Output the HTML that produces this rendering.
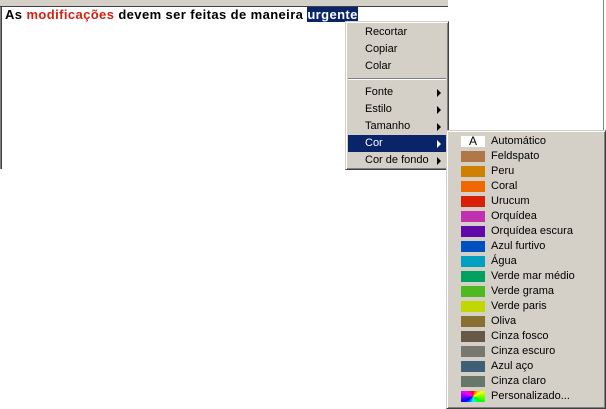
<!DOCTYPE html>
<html><head><meta charset="utf-8"><style>
*{margin:0;padding:0;box-sizing:border-box}
body{width:606px;height:409px;background:#fff;position:relative;overflow:hidden;font-family:"Liberation Sans",sans-serif;font-size:11px}
.abs{position:absolute}
.menu{position:absolute;background:#d4d0c8;border-top:1px solid #d4d0c8;border-left:1px solid #d4d0c8;border-right:1px solid #404040;border-bottom:1px solid #404040;box-shadow:inset 1px 1px 0 #fff,inset -1px -1px 0 #808080}
.it{position:absolute;left:2px;right:2px;height:17px;line-height:17px;padding-left:17px;color:#000}
.it.sel{background:#0a246a;color:#fff}
.arr{position:absolute;right:5px;top:5px;width:0;height:0;border-top:4px solid transparent;border-bottom:4px solid transparent;border-left:4px solid #000}
.sel .arr{border-left-color:#fff}
.ci{position:absolute;left:0;height:15px;line-height:15px;padding-left:44px;color:#000;white-space:nowrap}
.sw{position:absolute;left:14px;top:2px;width:24px;height:11px}
</style></head><body>
<div class="abs" style="left:0;top:0;width:448px;height:7px;background:#d4d0c8;border-bottom:1px solid #404040"></div>
<div class="abs" style="left:0;top:7px;width:2px;height:162px;background:#808080;border-right:1px solid #404040"></div>
<div class="abs" style="left:603px;top:0;width:1px;height:130px;background:#808080"></div>
<div class="abs" style="left:5px;top:7px;font-size:13px;font-weight:bold;line-height:16px;white-space:nowrap;letter-spacing:0.4px">As <span style="color:#d42010">modificações</span> devem ser feitas de maneira <span style="background:#0a246a;color:#fff">urgente</span></div>
<div class="menu" style="left:345px;top:21px;width:104px;height:149px">
<div class="it" style="top:2px">Recortar</div>
<div class="it" style="top:19px">Copiar</div>
<div class="it" style="top:36px">Colar</div>
<div class="abs" style="left:2px;right:2px;top:56px;height:2px;border-top:1px solid #808080;border-bottom:1px solid #fff"></div>
<div class="it" style="top:62px">Fonte<span class="arr"></span></div>
<div class="it" style="top:79px">Estilo<span class="arr"></span></div>
<div class="it" style="top:96px">Tamanho<span class="arr"></span></div>
<div class="it sel" style="top:113px">Cor<span class="arr"></span></div>
<div class="it" style="top:130px">Cor de fondo<span class="arr"></span></div>
</div>
<div class="menu" style="left:446px;top:130px;width:160px;height:279px">
<div class="ci" style="top:3px"><span class="sw" style="background:#fff;color:#000;text-align:center;line-height:11px;font-size:12px">A</span>Automático</div>
<div class="ci" style="top:18px"><span class="sw" style="background:#b07848"></span>Feldspato</div>
<div class="ci" style="top:33px"><span class="sw" style="background:#d08000"></span>Peru</div>
<div class="ci" style="top:48px"><span class="sw" style="background:#f06800"></span>Coral</div>
<div class="ci" style="top:63px"><span class="sw" style="background:#d82008"></span>Urucum</div>
<div class="ci" style="top:78px"><span class="sw" style="background:#c030b0"></span>Orquídea</div>
<div class="ci" style="top:93px"><span class="sw" style="background:#6008a8"></span>Orquídea escura</div>
<div class="ci" style="top:108px"><span class="sw" style="background:#0050c0"></span>Azul furtivo</div>
<div class="ci" style="top:123px"><span class="sw" style="background:#00a0c0"></span>Água</div>
<div class="ci" style="top:138px"><span class="sw" style="background:#00a060"></span>Verde mar médio</div>
<div class="ci" style="top:153px"><span class="sw" style="background:#50b820"></span>Verde grama</div>
<div class="ci" style="top:168px"><span class="sw" style="background:#c0d800"></span>Verde paris</div>
<div class="ci" style="top:183px"><span class="sw" style="background:#887030"></span>Oliva</div>
<div class="ci" style="top:198px"><span class="sw" style="background:#685848"></span>Cinza fosco</div>
<div class="ci" style="top:213px"><span class="sw" style="background:#787870"></span>Cinza escuro</div>
<div class="ci" style="top:228px"><span class="sw" style="background:#406078"></span>Azul aço</div>
<div class="ci" style="top:243px"><span class="sw" style="background:#687868"></span>Cinza claro</div>
<div class="ci" style="top:258px"><span class="sw" style="background:conic-gradient(red,yellow,lime,cyan,blue,magenta,red)"></span>Personalizado...</div>
</div>
</body></html>
